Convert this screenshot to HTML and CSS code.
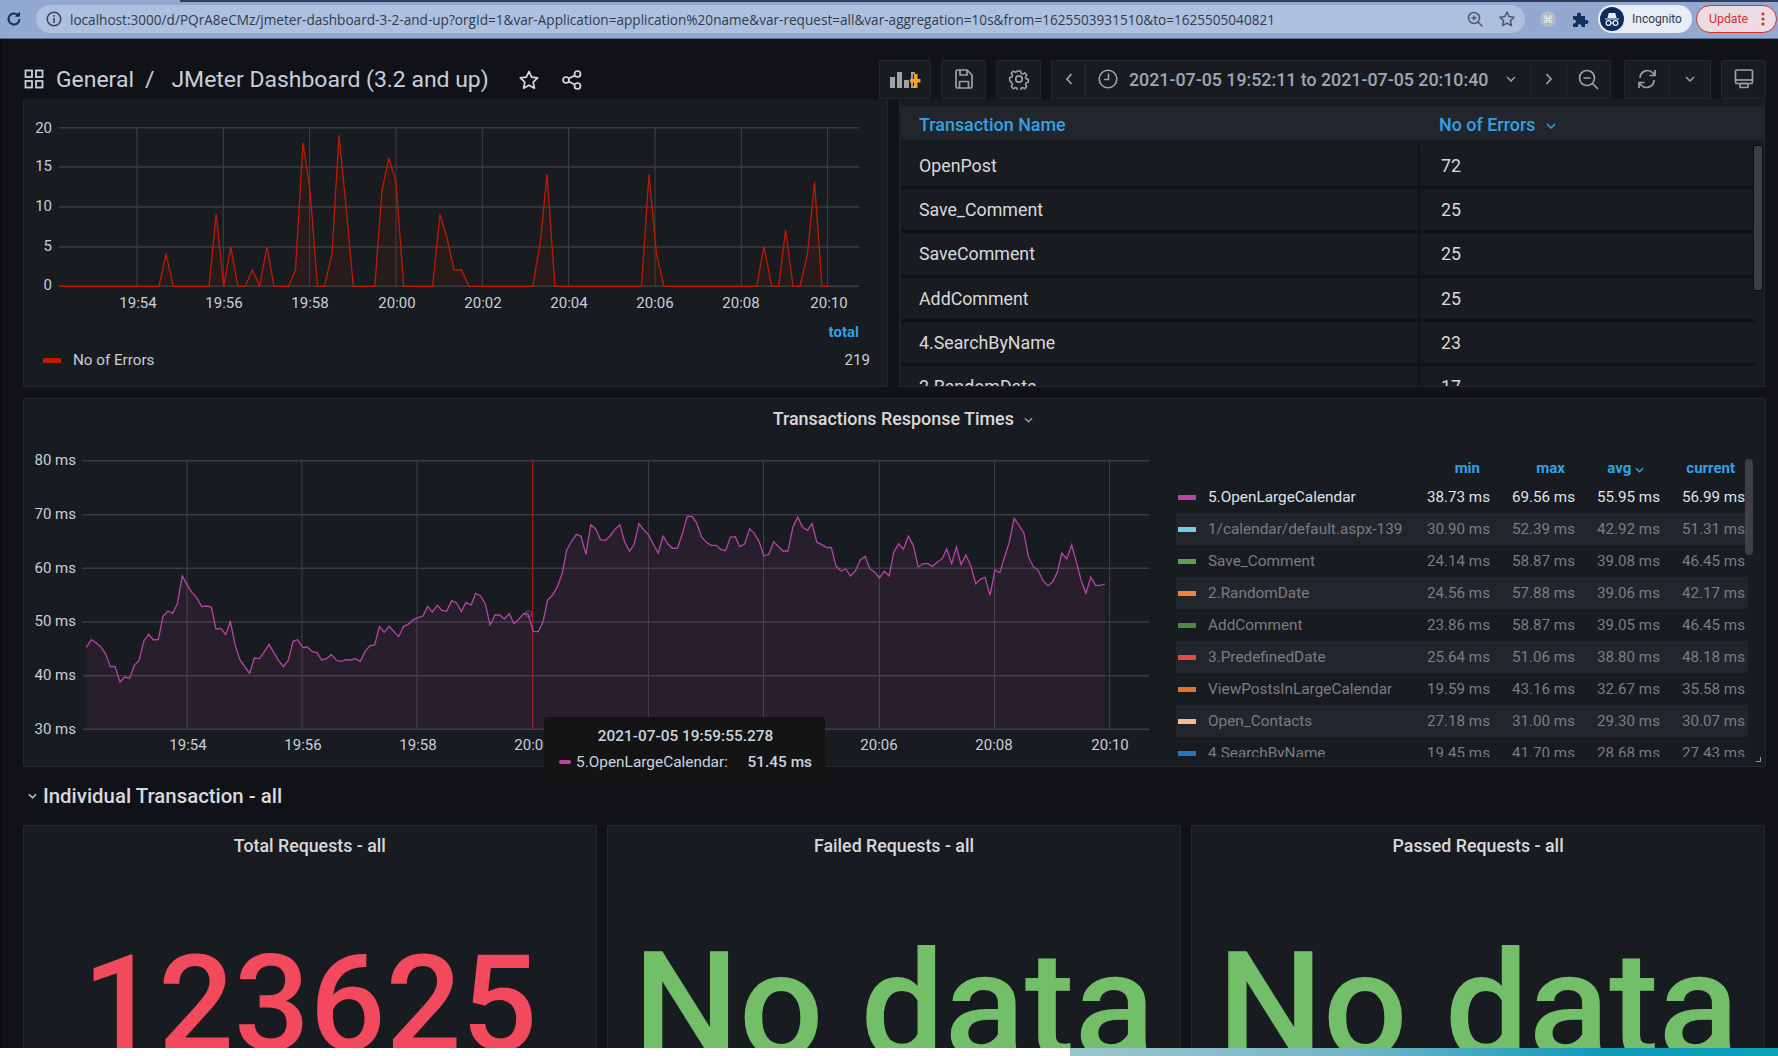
FILE: index.html
```html
<!DOCTYPE html>
<html lang="en">
<head>
    <meta charset="UTF-8">
    <title>JMeter Dashboard (3.2 and up) - Grafana</title>
    <link rel="stylesheet" href="styles.css">
</head>
<body>
    <!-- browser toolbar -->
    <div class="chrome">
        <div class="chrome-top"></div>
        <div class="chrome-row">
            <svg class="reload" width="18" height="18" viewBox="0 0 18 18"><path d="M14.5 9a5.5 5.5 0 1 1-1.7-4" fill="none" stroke="#12305f" stroke-width="2"/><path d="M15 1.5v5.2H9.8z" fill="#12305f"/></svg>
            <div class="omnibox">
                <svg width="18" height="18" viewBox="0 0 18 18"><circle cx="9" cy="9" r="6.8" fill="none" stroke="#3c4350" stroke-width="1.5"/><rect x="8.2" y="8" width="1.6" height="5" fill="#3c4350"/><rect x="8.2" y="5" width="1.6" height="1.7" fill="#3c4350"/></svg>
                <span class="url">localhost:3000/d/PQrA8eCMz/jmeter-dashboard-3-2-and-up?orgId=1&amp;var-Application=application%20name&amp;var-request=all&amp;var-aggregation=10s&amp;from=1625503931510&amp;to=1625505040821</span>
                <span class="omni-icons">
                    <svg width="18" height="18" viewBox="0 0 18 18" fill="none" stroke="#4f5866" stroke-width="1.5"><circle cx="8" cy="8" r="5.5"/><path d="M12 12l4.5 4.5M5.5 8h5M8 5.5v5"/></svg>
                    <svg width="18" height="18" viewBox="0 0 18 18"><path d="M9 2l2.1 4.6 5 .6-3.7 3.4 1 5L9 13.100l-4.400 2.500 1-5L1.900 7.200l5-.6z" fill="none" stroke="#4f5866" stroke-width="1.5" stroke-linejoin="round"/></svg>
                </span>
            </div>
            <span class="ext-grey">⌘</span>
            <svg class="ext-puzzle" width="17" height="17" viewBox="0 0 17 17"><path d="M1 5h4V3.500a2 2 0 0 1 4 0V5h4v4h1.500a2 2 0 0 1 0 4H13v3H9.500v-1.200a1.800 1.800 0 0 0-3.600 0V16H1v-3.500h1a2 2 0 0 0 0-4H1z" fill="#12305f"/></svg>
            <div class="incognito">
                <svg width="24" height="24" viewBox="0 0 24 24"><circle cx="12" cy="12" r="12" fill="#0f2a5c"/><path d="M5 11.500h14v1H5zM7.500 11l1.200-5h6.600l1.200 5z" fill="#e8edf6"/><circle cx="8.500" cy="16" r="2.400" fill="none" stroke="#e8edf6" stroke-width="1.200"/><circle cx="15.500" cy="16" r="2.400" fill="none" stroke="#e8edf6" stroke-width="1.200"/><path d="M10.900 16h2.200" stroke="#e8edf6" stroke-width="1.200"/></svg>
                <span>Incognito</span>
            </div>
            <div class="update">
                <span>Update</span>
                <svg width="4" height="14" viewBox="0 0 4 14" fill="#d93025"><circle cx="2" cy="2" r="1.600"/><circle cx="2" cy="7" r="1.600"/><circle cx="2" cy="12" r="1.600"/></svg>
            </div>
        </div>
    </div>

    <div class="dash">
        <div class="nav">
            <svg class="nav-grid" width="20" height="20" viewBox="0 0 20 20" fill="none" stroke="#c7d0d9" stroke-width="1.800"><rect x="1.500" y="1.500" width="6.500" height="6.500"/><rect x="12" y="1.500" width="6.500" height="6.500"/><rect x="1.500" y="12" width="6.500" height="6.500"/><rect x="12" y="12" width="6.500" height="6.500"/></svg>
            <span class="crumb">General</span>
            <span class="crumb crumb-sep">/</span>
            <span class="crumb">JMeter Dashboard (3.2 and up)</span>
            <svg class="nav-star" width="22" height="22" viewBox="0 0 22 22"><path d="M11 2.500l2.600 5.600 6.100.8-4.500 4.200 1.200 6.100L11 16.200l-5.400 3 1.200-6.100-4.500-4.200 6.100-.8z" fill="none" stroke="#d8d9da" stroke-width="1.700" stroke-linejoin="round"/></svg>
            <svg class="nav-share" width="22" height="22" viewBox="0 0 22 22" fill="none" stroke="#d8d9da" stroke-width="1.700"><circle cx="16.500" cy="5" r="3"/><circle cx="5" cy="11" r="3"/><circle cx="16.500" cy="17" r="3"/><path d="M7.700 9.600l6.100-3.200M7.700 12.400l6.100 3.200"/></svg>

            <div class="tools">
                <button class="tool tool-add">
                    <svg width="32" height="18" viewBox="0 0 32 18"><path d="M1 7h5v11H1zM8 2h5v16H8zM15 10h5v8h-5zM22 2h4v2h-2v12h2v2h-4z" fill="#9fa1a6"/><path d="M25.500 4h3.500v5h3v3.500h-3v5.500h-3.500v-5.500h-4V9h4z" transform="translate(-0.500 0)" fill="#f5a623"/></svg>
                </button>
                <button class="tool tool-sq">
                    <svg width="20" height="22" viewBox="0 0 20 22" fill="none" stroke="#9fa1a6" stroke-width="1.700" stroke-linejoin="round"><path d="M2 3.500a1.500 1.500 0 0 1 1.500-1.500H13l5 5v11.500a1.500 1.500 0 0 1-1.500 1.500h-13A1.500 1.500 0 0 1 2 18.500z"/><path d="M6 2v5h7V2M5.500 20v-6.500h9V20"/></svg>
                </button>
                <button class="tool tool-sq">
                    <svg width="22" height="22" viewBox="0 0 22 22" fill="none" stroke="#9fa1a6" stroke-width="1.700" stroke-linejoin="round"><circle cx="11" cy="11" r="3.200"/><path d="M9.300 2h3.400l.6 2.700 1.700.8 2.400-1.300 2.200 2.400-1.400 2.300.6 1.800 2.600.7v3.200l-2.600.7-.6 1.800 1.400 2.300-2.200 2.400-2.400-1.300-1.700.8-.6 2.700H9.300l-.6-2.700-1.700-.8-2.400 1.300-2.200-2.400 1.400-2.300-.6-1.800L.6 12.600V9.400l2.600-.7.6-1.800-1.400-2.300 2.200-2.400L7 3.500l1.700-.8z" transform="translate(1.100 1.100) scale(.9)"/></svg>
                </button>
                <div class="tool-group time-group">
                    <button class="tool seg seg-nav"><svg width="10" height="14" viewBox="0 0 10 14"><path d="M7.500 2L3 7l4.500 5" fill="none" stroke="#9fa1a6" stroke-width="1.700"/></svg></button>
                    <button class="tool seg seg-time">
                        <svg width="20" height="20" viewBox="0 0 20 20" fill="none" stroke="#9fa1a6" stroke-width="1.600"><circle cx="10" cy="10" r="8.800"/><path d="M10.500 4.500V10.500H6"/></svg>
                        <span>2021-07-05 19:52:11 to 2021-07-05 20:10:40</span>
                        <svg class="chev" width="10" height="6" viewBox="0 0 10 6"><path d="M1 1l4 4 4-4" fill="none" stroke="#9fa1a6" stroke-width="1.500"/></svg>
                    </button>
                    <button class="tool seg seg-nav"><svg width="10" height="14" viewBox="0 0 10 14"><path d="M2.500 2L7 7l-4.500 5" fill="none" stroke="#9fa1a6" stroke-width="1.700"/></svg></button>
                    <button class="tool seg seg-zoom"><svg width="21" height="21" viewBox="0 0 21 21" fill="none" stroke="#9fa1a6" stroke-width="1.700"><circle cx="9" cy="9" r="7.500"/><path d="M14.500 14.500l5.500 5.500M5.500 9h7"/></svg></button>
                </div>
                <div class="tool-group refresh-group">
                    <button class="tool seg seg-refresh"><svg width="20" height="22" viewBox="0 0 20 22" fill="none" stroke="#9fa1a6" stroke-width="1.700"><path d="M3 10a7.500 7.500 0 0 1 13-5l1.500 2M17 12a7.500 7.500 0 0 1-13 5l-1.500-2"/><path d="M18 2v5.500h-5.500M2 20v-5.500h5.500"/></svg></button>
                    <button class="tool seg seg-down"><svg width="10" height="6" viewBox="0 0 10 6"><path d="M1 1l4 4 4-4" fill="none" stroke="#9fa1a6" stroke-width="1.500"/></svg></button>
                </div>
                <button class="tool tool-sq">
                    <svg width="20" height="20" viewBox="0 0 20 20" fill="none" stroke="#9fa1a6" stroke-width="1.700"><rect x="1.500" y="1" width="17" height="13.500" rx="1.500"/><path d="M1.500 11h17"/><rect x="6" y="14.500" width="8" height="4" rx="1"/></svg>
                </button>
            </div>
        </div>

        <div class="row-top">
            <div class="panel panel-errors">
                <svg class="chart" width="863" height="220" viewBox="24 99 863 220">
                    <g class="grid-v">
                        <path d="M137 127V286M223.300 127V286M309.600 127V286M396 127V286M482.300 127V286M568.600 127V286M655 127V286M741.300 127V286M827.600 127V286"/>
                    </g>
                    <g class="grid-h">
                        <path d="M59 127.700H859M59 167H859M59 207H859M59 247H859M59 286.300H859"/>
                    </g>
                    <path class="area-red" d="M59 286.300H159L166 254 173.400 286.300H209L216.200 214 223.700 286.300 230.700 246.500 238 286.300H245L252.600 270 259.600 286.300 267 246.500 274 286.300H288.500L295.500 270 303 143 310 190 317.500 286.300H324.400L332 254 339 135 346 206 353.300 286.300H374.800L382 190 389 158 396 182 403.700 286.300H432.600L440 214 447 238 454 270H461.500L469 286.300H532.800L540.800 238 547 174 555 286.300H641.500L649 174 656.500 254 664 286.300H756.600L764 246.500 771.700 286.300H778.600L785.600 230 793 286.300H800L807.500 254 814.500 182 822 286.300H829Z"/>
                    <path class="line-red" d="M59 286.300H159L166 254 173.400 286.300H209L216.200 214 223.700 286.300 230.700 246.500 238 286.300H245L252.600 270 259.600 286.300 267 246.500 274 286.300H288.500L295.500 270 303 143 310 190 317.500 286.300H324.400L332 254 339 135 346 206 353.300 286.300H374.800L382 190 389 158 396 182 403.700 286.300H432.600L440 214 447 238 454 270H461.500L469 286.300H532.800L540.800 238 547 174 555 286.300H641.500L649 174 656.500 254 664 286.300H756.600L764 246.500 771.700 286.300H778.600L785.600 230 793 286.300H800L807.500 254 814.500 182 822 286.300H829"/>
                    <g class="tick tick-y">
                        <text x="52" y="133">20</text>
                        <text x="52" y="171">15</text>
                        <text x="52" y="211">10</text>
                        <text x="52" y="251">5</text>
                        <text x="52" y="290">0</text>
                    </g>
                    <g class="tick tick-x">
                        <text x="138" y="308">19:54</text>
                        <text x="224" y="308">19:56</text>
                        <text x="310" y="308">19:58</text>
                        <text x="397" y="308">20:00</text>
                        <text x="483" y="308">20:02</text>
                        <text x="569" y="308">20:04</text>
                        <text x="655" y="308">20:06</text>
                        <text x="741" y="308">20:08</text>
                        <text x="829" y="308">20:10</text>
                    </g>
                </svg>
                <div class="err-legend">
                    <div class="err-head">total</div>
                    <div class="err-row">
                        <span class="swatch swatch-red"></span>
                        <span class="err-name">No of Errors</span>
                        <span class="err-val">219</span>
                    </div>
                </div>
            </div>

            <div class="panel panel-table">
                <div class="tbl-head">
                    <span class="tbl-c1">Transaction Name</span>
                    <span class="tbl-c2">No of Errors
                        <svg width="10" height="6" viewBox="0 0 10 6"><path d="M1 1l4 4 4-4" fill="none" stroke="#33a2e5" stroke-width="1.500"/></svg>
                    </span>
                </div>
                <div class="tbl-body">
                    <div class="tbl-row"><span class="tbl-c1">OpenPost</span><span class="tbl-c2">72</span></div>
                    <div class="tbl-row"><span class="tbl-c1">Save_Comment</span><span class="tbl-c2">25</span></div>
                    <div class="tbl-row"><span class="tbl-c1">SaveComment</span><span class="tbl-c2">25</span></div>
                    <div class="tbl-row"><span class="tbl-c1">AddComment</span><span class="tbl-c2">25</span></div>
                    <div class="tbl-row"><span class="tbl-c1">4.SearchByName</span><span class="tbl-c2">23</span></div>
                    <div class="tbl-row"><span class="tbl-c1">2.RandomDate</span><span class="tbl-c2">17</span></div>
                    <div class="tbl-scroll"></div>
                </div>
            </div>
        </div>

        <div class="panel panel-times">
            <div class="panel-title">Transactions Response Times
                <svg width="9" height="6" viewBox="0 0 10 6"><path d="M1 1l4 4 4-4" fill="none" stroke="#9fa1a6" stroke-width="1.400"/></svg>
            </div>
            <div class="times-body">
                <svg class="chart" width="1152" height="326" viewBox="24 440 1152 326">
                    <g class="grid-v">
                        <path d="M187 460V729M302 460V729M417 460V729M648.400 460V729M763.500 460V729M879.400 460V729M994.500 460V729M1109.600 460V729"/>
                    </g>
                    <g class="grid-h">
                        <path d="M82.700 460.700H1149M82.700 514.700H1149M82.700 568.300H1149M82.700 622H1149M82.700 675.700H1149M82.700 729.300H1149"/>
                    </g>
                    <path class="cursor" d="M532.700 460V729"/>
                    <!-- series traced in two parts, either side of the cursor -->
                    <g transform="translate(60 440) scale(0.33333)">
                        <polygon class="area-purple" points="79,868 79,622 94,599 108,608 122,620 136,640 151,680 165,679 180,726 194,711 209,715 223,676 237,661 252,602 266,583 280,600 295,598 309,529 324,513 338,520 352,491 367,408 381,434 396,458 410,473 425,500 440,498 454,501 468,567 483,565 497,584 511,545 526,617 540,660 555,681 569,700 583,654 598,656 612,637 627,613 641,637 656,662 670,680 685,661 699,604 713,599 728,622 742,621 757,635 771,638 785,660 800,656 814,644 829,660 843,665 857,659 872,660 886,656 901,664 915,635 930,617 944,615 958,560 973,577 987,559 1002,575 1016,590 1031,559 1045,553 1060,539 1074,533 1089,528 1103,499 1117,516 1132,496 1146,511 1160,514 1175,482 1189,488 1204,514 1218,487 1233,495 1247,460 1261,467 1276,491 1290,555 1305,525 1319,525 1333,537 1348,521 1362,551 1377,537 1391,521 1405,522 1405,868"/>
                        <polyline class="line-purple" points="79,622 94,599 108,608 122,620 136,640 151,680 165,679 180,726 194,711 209,715 223,676 237,661 252,602 266,583 280,600 295,598 309,529 324,513 338,520 352,491 367,408 381,434 396,458 410,473 425,500 440,498 454,501 468,567 483,565 497,584 511,545 526,617 540,660 555,681 569,700 583,654 598,656 612,637 627,613 641,637 656,662 670,680 685,661 699,604 713,599 728,622 742,621 757,635 771,638 785,660 800,656 814,644 829,660 843,665 857,659 872,660 886,656 901,664 915,635 930,617 944,615 958,560 973,577 987,559 1002,575 1016,590 1031,559 1045,553 1060,539 1074,533 1089,528 1103,499 1117,516 1132,496 1146,511 1160,514 1175,482 1189,488 1204,514 1218,487 1233,495 1247,460 1261,467 1276,491 1290,555 1305,525 1319,525 1333,537 1348,521 1362,551 1377,537 1391,521 1405,522"/>
                        <circle class="hover-dot" cx="1405" cy="522" r="9"/>
                    </g>
                    <g transform="translate(530 440) scale(0.40816 0.33333)">
                        <polygon class="area-purple" points="-5,868 -5,522 8,574 20,575 32,545 43,480 55,466 67,440 79,400 90,330 102,303 114,283 125,289 137,343 149,254 161,267 173,300 185,301 196,288 208,268 220,254 232,306 244,334 255,313 267,251 279,270 290,284 302,312 314,339 326,288 338,312 349,325 361,325 373,283 385,229 397,229 408,248 420,290 432,307 444,316 456,316 467,328 479,332 491,291 503,290 514,320 526,312 538,266 550,281 561,304 573,348 585,343 597,305 609,320 620,333 632,333 644,262 656,231 668,262 680,271 691,251 703,307 715,314 727,323 738,322 750,379 762,393 774,387 785,408 797,393 809,360 821,349 833,387 844,396 856,414 868,394 880,408 891,338 903,311 915,328 927,288 939,316 951,381 963,371 975,371 986,379 998,366 1010,356 1021,327 1033,371 1045,321 1056,374 1068,345 1080,377 1092,431 1104,417 1115,412 1127,466 1139,390 1151,398 1162,354 1174,308 1186,235 1198,256 1210,279 1221,350 1233,380 1245,391 1257,422 1269,437 1280,426 1292,397 1303,339 1315,357 1327,315 1339,367 1350,420 1362,460 1374,411 1386,436 1398,436 1409,432 1409,868"/>
                        <polyline class="line-purple" points="-5,522 8,574 20,575 32,545 43,480 55,466 67,440 79,400 90,330 102,303 114,283 125,289 137,343 149,254 161,267 173,300 185,301 196,288 208,268 220,254 232,306 244,334 255,313 267,251 279,270 290,284 302,312 314,339 326,288 338,312 349,325 361,325 373,283 385,229 397,229 408,248 420,290 432,307 444,316 456,316 467,328 479,332 491,291 503,290 514,320 526,312 538,266 550,281 561,304 573,348 585,343 597,305 609,320 620,333 632,333 644,262 656,231 668,262 680,271 691,251 703,307 715,314 727,323 738,322 750,379 762,393 774,387 785,408 797,393 809,360 821,349 833,387 844,396 856,414 868,394 880,408 891,338 903,311 915,328 927,288 939,316 951,381 963,371 975,371 986,379 998,366 1010,356 1021,327 1033,371 1045,321 1056,374 1068,345 1080,377 1092,431 1104,417 1115,412 1127,466 1139,390 1151,398 1162,354 1174,308 1186,235 1198,256 1210,279 1221,350 1233,380 1245,391 1257,422 1269,437 1280,426 1292,397 1303,339 1315,357 1327,315 1339,367 1350,420 1362,460 1374,411 1386,436 1398,436 1409,432"/>
                    </g>
                    <g class="tick tick-y">
                        <text x="76" y="465">80 ms</text>
                        <text x="76" y="519">70 ms</text>
                        <text x="76" y="573">60 ms</text>
                        <text x="76" y="626">50 ms</text>
                        <text x="76" y="680">40 ms</text>
                        <text x="76" y="734">30 ms</text>
                    </g>
                    <g class="tick tick-x">
                        <text x="188" y="750">19:54</text>
                        <text x="303" y="750">19:56</text>
                        <text x="418" y="750">19:58</text>
                        <text x="533" y="750">20:00</text>
                        <text x="879" y="750">20:06</text>
                        <text x="994" y="750">20:08</text>
                        <text x="1110" y="750">20:10</text>
                    </g>
                </svg>

                <div class="legend">
                    <div class="lg-row lg-head">
                        <span></span><span>min</span><span>max</span>
                        <span class="lg-avg">avg <svg width="9" height="6" viewBox="0 0 10 6"><path d="M1 1l4 4 4-4" fill="none" stroke="#33a2e5" stroke-width="1.500"/></svg></span>
                        <span class="lg-cur">current</span>
                    </div>
                    <div class="lg-row lg-on"><span class="lg-name"><i class="swatch" style="background:#ba43a9"></i>5.OpenLargeCalendar</span><span>38.73 ms</span><span>69.56 ms</span><span>55.95 ms</span><span>56.99 ms</span></div>
                    <div class="lg-row"><span class="lg-name"><i class="swatch" style="background:#6ed0e0"></i>1/calendar/default.aspx-139</span><span>30.90 ms</span><span>52.39 ms</span><span>42.92 ms</span><span>51.31 ms</span></div>
                    <div class="lg-row"><span class="lg-name"><i class="swatch" style="background:#629e51"></i>Save_Comment</span><span>24.14 ms</span><span>58.87 ms</span><span>39.08 ms</span><span>46.45 ms</span></div>
                    <div class="lg-row"><span class="lg-name"><i class="swatch" style="background:#ef843c"></i>2.RandomDate</span><span>24.56 ms</span><span>57.88 ms</span><span>39.06 ms</span><span>42.17 ms</span></div>
                    <div class="lg-row"><span class="lg-name"><i class="swatch" style="background:#508642"></i>AddComment</span><span>23.86 ms</span><span>58.87 ms</span><span>39.05 ms</span><span>46.45 ms</span></div>
                    <div class="lg-row"><span class="lg-name"><i class="swatch" style="background:#e24d42"></i>3.PredefinedDate</span><span>25.64 ms</span><span>51.06 ms</span><span>38.80 ms</span><span>48.18 ms</span></div>
                    <div class="lg-row"><span class="lg-name"><i class="swatch" style="background:#e0752d"></i>ViewPostsInLargeCalendar</span><span>19.59 ms</span><span>43.16 ms</span><span>32.67 ms</span><span>35.58 ms</span></div>
                    <div class="lg-row"><span class="lg-name"><i class="swatch" style="background:#f9ba8f"></i>Open_Contacts</span><span>27.18 ms</span><span>31.00 ms</span><span>29.30 ms</span><span>30.07 ms</span></div>
                    <div class="lg-row"><span class="lg-name"><i class="swatch" style="background:#1f78c1"></i>4.SearchByName</span><span>19.45 ms</span><span>41.70 ms</span><span>28.68 ms</span><span>27.43 ms</span></div>
                    <div class="lg-scroll"></div>
                </div>
            </div>
            <div class="resize-mark"></div>
            <div class="tooltip">
                <div class="tip-time">2021-07-05 19:59:55.278</div>
                <div class="tip-row">
                    <i class="tip-swatch"></i>
                    <span class="tip-name">5.OpenLargeCalendar:</span>
                    <span class="tip-val">51.45 ms</span>
                </div>
            </div>
        </div>

        <div class="row-title">
            <svg width="9" height="6" viewBox="0 0 10 6"><path d="M1 1l4 4 4-4" fill="none" stroke="#c7d0d9" stroke-width="1.500"/></svg>
            <span>Individual Transaction - all</span>
        </div>

        <div class="stats">
            <div class="panel stat">
                <div class="stat-title">Total Requests - all</div>
                <div class="stat-value stat-red">123625</div>
            </div>
            <div class="panel stat">
                <div class="stat-title">Failed Requests - all</div>
                <div class="stat-value stat-green">No data</div>
            </div>
            <div class="panel stat">
                <div class="stat-title">Passed Requests - all</div>
                <div class="stat-value stat-green">No data</div>
            </div>
        </div>
    </div>

    <div class="bottom-strip">
        <div class="strip-white"></div>
        <div class="strip-teal"></div>
    </div>
</body>
</html>
```
FILE: styles.css
```css
* {
    box-sizing: border-box;
}

html, body {
    margin: 0;
    height: 1056px;
    overflow: hidden;
}

body {
    display: flex;
    flex-direction: column;
    background: #111217;
    font-family: Roboto, "Liberation Sans", sans-serif;
    color: #d8d9da;
}

/* browser toolbar */
.chrome {
    height: 39px;
    flex: none;
    background: #93a9d1;
    border-bottom: 1px solid #5d6f92;
}

.chrome-top {
    height: 2px;
    margin-left: 180px;
    background: #2f3d5a;
}

.chrome-row {
    display: flex;
    align-items: center;
    height: 32px;
    padding: 2px 1px 0 5px;
}

.reload {
    flex: none;
}

.omnibox {
    display: flex;
    align-items: center;
    width: 1489px;
    height: 28px;
    margin-left: 13px;
    padding-left: 9px;
    border-radius: 14px;
    background: #adc0e0;
}

.url {
    margin-left: 7px;
    font-family: "Open Sans", sans-serif;
    font-size: 13.600px;
    color: #333a4a;
    white-space: nowrap;
}

.omni-icons {
    display: flex;
    gap: 14px;
    margin-left: auto;
    margin-right: 9px;
}

.ext-grey {
    display: flex;
    align-items: center;
    justify-content: center;
    width: 16px;
    height: 16px;
    margin-left: 15px;
    border-radius: 50%;
    background: #b5b9c2;
    color: #f2f2f2;
    font-family: "DejaVu Sans", sans-serif;
    font-size: 10px;
}

.ext-puzzle {
    margin-left: 16px;
}

.incognito {
    display: flex;
    align-items: center;
    gap: 8px;
    width: 94px;
    height: 28px;
    margin-left: 9px;
    padding-left: 2px;
    border-radius: 14px;
    background: #e8edf6;
    font-size: 12px;
    color: #333a4a;
}

.update {
    display: flex;
    align-items: center;
    justify-content: space-between;
    width: 81px;
    height: 28px;
    margin-left: 4px;
    padding: 0 11px 0 12px;
    border: 1px solid #d93025;
    border-radius: 14px;
    background: #ecdbe3;
    font-size: 12.300px;
    color: #d93025;
}

/* dashboard */
.dash {
    flex: 1;
    min-height: 0;
    overflow: hidden;
    padding: 0 12px 0 20px;
    border-left: 3px solid #0c0d10;
}

.nav {
    display: flex;
    align-items: center;
    height: 60px;
    padding-top: 20px;
}

.nav-grid {
    margin: 0 12px 0 1px;
}

.crumb {
    font-size: 22.950px;
    color: #c7d0d9;
    white-space: nowrap;
}

.crumb-sep {
    margin: 0 17px 0 11px;
}

.nav-star {
    margin: 2px 0 0 29px;
}

.nav-share {
    margin: 2px 0 0 21px;
}

.tools {
    display: flex;
    align-items: stretch;
    gap: 10px;
    height: 39px;
    margin: 0 0 0 auto;
}

.tool {
    display: flex;
    align-items: center;
    justify-content: center;
    padding: 0;
    border: 1px solid #24272c;
    border-radius: 2px;
    background: #181b1f;
}

.tool-add {
    width: 52px;
}

.tool-sq {
    width: 45px;
}

.tool-group {
    display: flex;
}

.refresh-group {
    margin-left: 3px;
}

.seg {
    border-radius: 0;
}

.seg + .seg {
    border-left: 0;
}

.seg-nav {
    width: 35px;
}

.seg-time {
    width: 446px;
    justify-content: flex-start;
    padding-left: 12px;
    font-family: Roboto, sans-serif;
    font-size: 17.800px;
    font-weight: 500;
    color: #9fa7b3;
}

.seg-time span {
    margin-left: 11px;
    white-space: nowrap;
}

.seg-time .chev {
    margin-left: 18px;
}

.seg-zoom {
    width: 44px;
}

.seg-refresh {
    width: 45px;
}

.seg-down {
    width: 42px;
}

.panel {
    border: 1px solid #24272c;
    border-radius: 2px;
    background: #181b1f;
}

.row-top {
    display: grid;
    grid-template-columns: 865px 866px;
    gap: 11px;
    height: 288px;
}

.panel-errors, .panel-table {
    border-top: 0;
    overflow: hidden;
}

/* charts */
.chart {
    display: block;
    flex: none;
}

.grid-v path {
    fill: none;
    stroke: #3f4246;
    stroke-width: 1;
}

.grid-h path {
    fill: none;
    stroke: #3a3c40;
    stroke-width: 1.500;
}

.line-red {
    fill: none;
    stroke: #bf1b00;
    stroke-width: 1.300;
}

.area-red {
    fill: #bf1b00;
    fill-opacity: .1;
}

.line-purple {
    fill: none;
    stroke: #ba43a9;
    stroke-width: 1.300;
    vector-effect: non-scaling-stroke;
}

.area-purple {
    fill: #ba43a9;
    fill-opacity: .1;
    stroke: none;
}

.hover-dot {
    fill: none;
    stroke: #ba43a9;
    stroke-opacity: .5;
    stroke-width: 1.500;
    vector-effect: non-scaling-stroke;
}

.cursor {
    stroke: #a31c1c;
    stroke-width: 1.300;
}

.tick text {
    font-family: Roboto, sans-serif;
    font-size: 15px;
    fill: #c7d0d9;
}

.tick-y text {
    text-anchor: end;
}

.tick-x text {
    text-anchor: middle;
}

.swatch {
    display: block;
    flex: none;
    width: 18px;
    height: 5px;
}

.swatch-red {
    background: #bf1b00;
}

.err-legend {
    padding: 4px 17px 0 19px;
}

.err-head {
    padding-right: 11px;
    height: 28px;
    text-align: right;
    font-size: 15px;
    font-weight: 700;
    color: #33a2e5;
}

.err-row {
    display: flex;
    align-items: center;
    font-size: 15.200px;
    color: #c7d0d9;
}

.err-name {
    margin-left: 12px;
}

.err-val {
    margin-left: auto;
}

/* table panel */
.tbl-head {
    display: flex;
    align-items: center;
    height: 33px;
    margin: 8px 0 5px 1px;
    padding-top: 2px;
    background: #22252b;
    font-size: 17.900px;
    font-weight: 500;
    color: #33a2e5;
}

.tbl-head svg {
    margin-left: 6px;
    vertical-align: 2px;
}

.tbl-c1 {
    width: 519px;
    flex: none;
    padding-left: 18px;
}

.tbl-c2 {
    padding-left: 19px;
}

.tbl-body {
    position: relative;
    height: 241px;
    overflow: hidden;
}

.tbl-row {
    display: flex;
    align-items: center;
    width: 854px;
    height: 44.200px;
    margin-left: 1px;
    border-bottom: 3px solid #111217;
    font-size: 17.800px;
    color: #d8d9da;
}

.tbl-row .tbl-c2 {
    padding-left: 21px;
}

.tbl-row .tbl-c1 {
    align-self: stretch;
    display: flex;
    align-items: center;
    border-right: 2px solid #111217;
}

.tbl-scroll {
    position: absolute;
    top: 0;
    right: 1px;
    width: 10px;
    height: 146px;
    background: #3b3e45;
    border: 1px solid #0c0d10;
}

/* response times panel */
.panel-times {
    position: relative;
    height: 369px;
    margin-top: 11px;
}

.panel-title {
    height: 41px;
    padding: 9px 0 0 17px;
    text-align: center;
    font-size: 17.900px;
    font-weight: 500;
    color: #d8d9da;
}

.panel-title svg {
    margin-left: 6px;
    vertical-align: 2px;
}

.times-body {
    display: flex;
}

.legend {
    position: relative;
    width: 580px;
    height: 302px;
    margin-top: 15px;
    overflow: hidden;
}

.lg-row {
    display: grid;
    grid-template-columns: 229px 85px 85px 85px 85px;
    align-items: center;
    width: 572px;
    height: 32px;
    font-size: 15.200px;
    color: #7b7d82;
    text-align: right;
    white-space: nowrap;
}

.lg-row:nth-child(odd) {
    background: #22252b;
}

.lg-row.lg-head {
    height: 26px;
    font-weight: 700;
    font-size: 15px;
    color: #33a2e5;
    background: none;
}

.lg-head span:nth-child(2) {
    padding-right: 10px;
}

.lg-head span:nth-child(3) {
    padding-right: 10px;
}

.lg-avg {
    padding-right: 16px;
}

.lg-cur {
    padding-right: 10px;
}

.lg-on {
    color: #dfe3e8;
}

.lg-name {
    display: flex;
    align-items: center;
    gap: 12px;
    padding-left: 2px;
    font-size: 15.350px;
    text-align: left;
}

.lg-scroll {
    position: absolute;
    top: 4px;
    right: 3px;
    width: 8px;
    height: 96px;
    border-radius: 4px;
    background: rgba(120, 124, 132, .38);
}

.resize-mark {
    position: absolute;
    right: 4px;
    bottom: 4px;
    width: 5px;
    height: 5px;
    border-right: 1px solid #8e9096;
    border-bottom: 1px solid #8e9096;
}

.tooltip {
    position: absolute;
    left: 520px;
    top: 318px;
    width: 281px;
    height: 69px;
    padding: 10px 13px 0 15px;
    border-radius: 4px;
    background: #141414;
    font-size: 15.400px;
    color: #c8d4e0;
}

.tip-time {
    text-align: center;
    font-weight: 500;
}

.tip-row {
    display: flex;
    align-items: center;
    margin-top: 8px;
}

.tip-swatch {
    display: block;
    width: 12px;
    height: 4px;
    margin-right: 5px;
    border-radius: 2px;
    background: #ba43a9;
}

.tip-val {
    margin-left: auto;
    font-weight: 500;
}

/* row below */
.row-title {
    display: flex;
    align-items: center;
    gap: 6px;
    height: 58px;
    padding: 0 0 0 5px;
    font-size: 20.400px;
    font-weight: 500;
    color: #d8d9da;
}

.stats {
    display: grid;
    grid-template-columns: repeat(3, 573.670px);
    gap: 10.500px;
}

.stat {
    height: 400px;
    overflow: hidden;
    text-align: center;
}

.stat-title {
    height: 42px;
    padding-top: 9px;
    font-size: 17.800px;
    font-weight: 500;
    color: #d8d9da;
}

.stat-value {
    font-weight: 500;
    line-height: 1;
    white-space: nowrap;
}

.stat-red {
    margin-top: 70px;
    font-size: 133.400px;
    color: #f2495c;
}

.stat-green {
    margin-top: 64px;
    font-size: 149px;
    color: #73bf69;
}

/* what shows of the window behind */
.bottom-strip {
    display: flex;
    height: 8px;
    flex: none;
}

.strip-white {
    width: 1070px;
    background: #fff;
}

.strip-teal {
    flex: 1;
    background: linear-gradient(90deg, #9cc6cf, #74b5c6 40%, #0f9ab8 75%, #0aa0bb);
}
```
